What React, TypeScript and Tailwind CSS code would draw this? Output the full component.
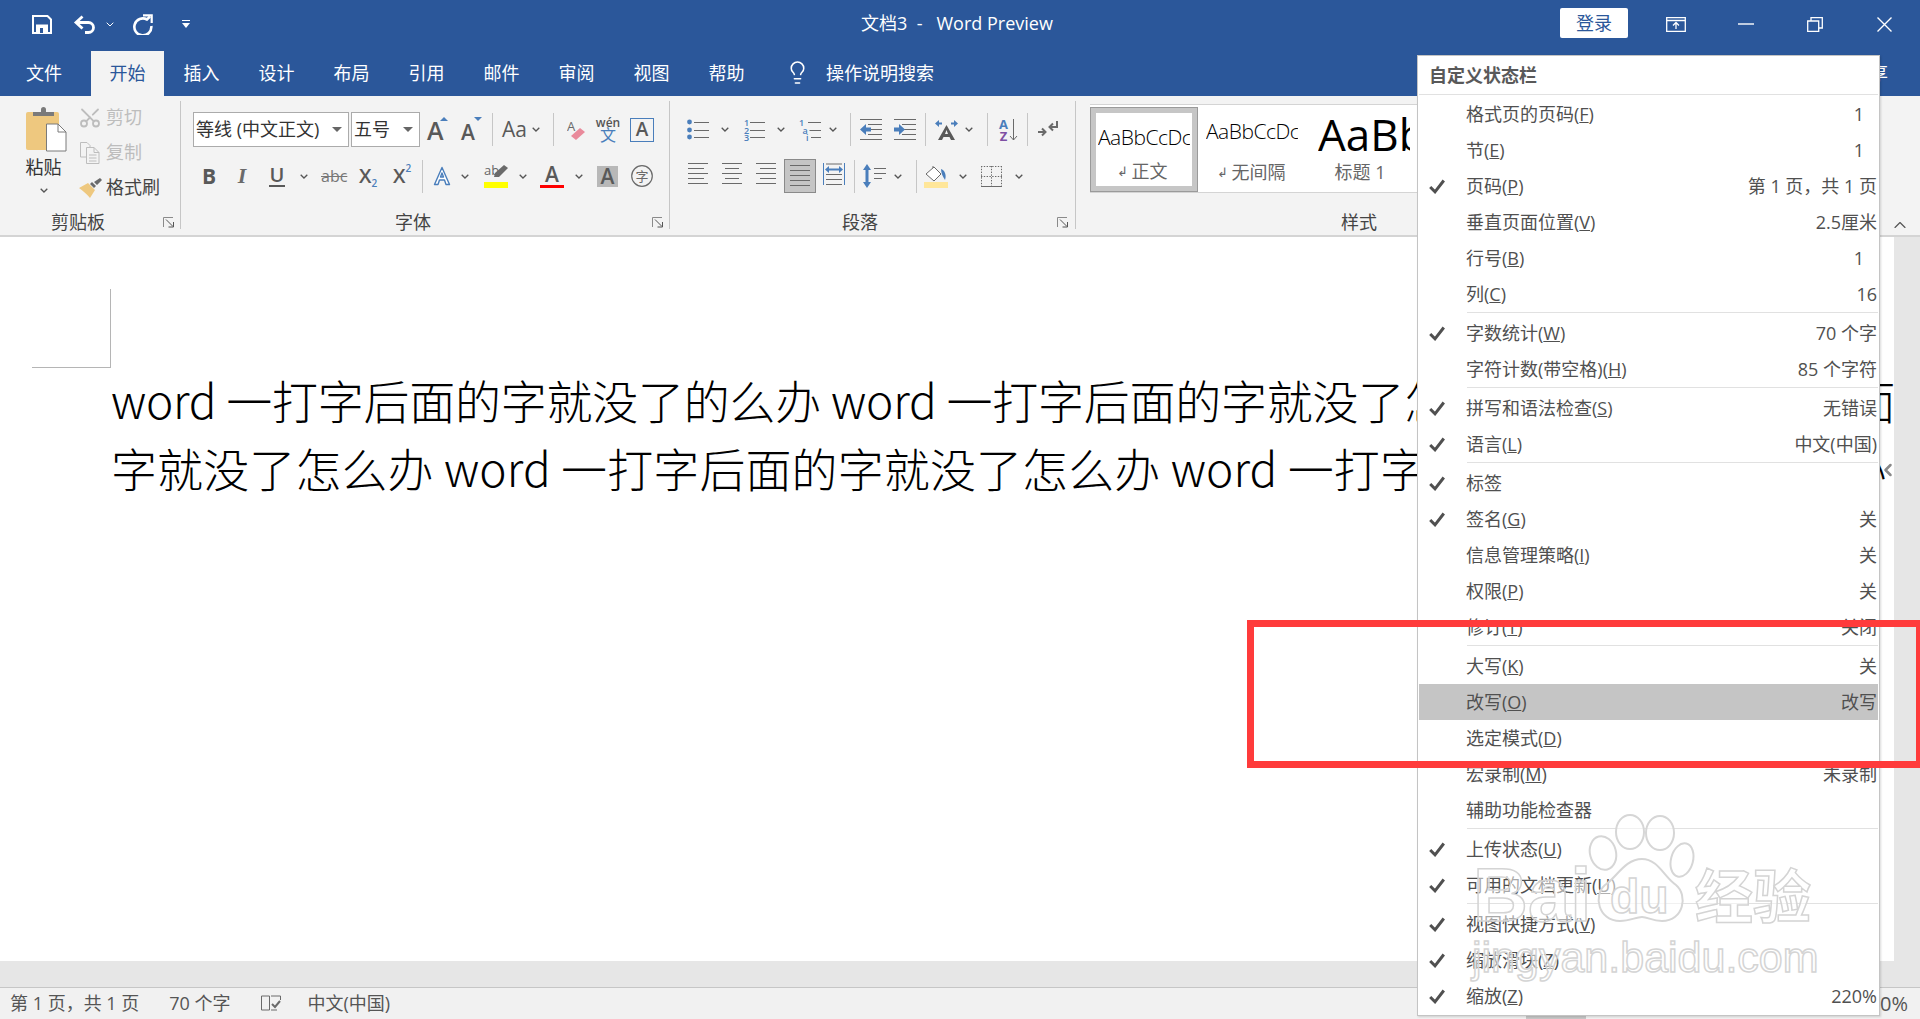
import { Lightbulb, Scissors, ChevronUp, ChevronLeft } from 'lucide-react';
import type { ReactNode } from 'react';

const TABS = [
  { label: '文件', w: 'w-[91px] pr-[3px]' },
  { label: '开始', w: 'w-[73px]', active: true },
  { label: '插入', w: 'w-[75px]' },
  { label: '设计', w: 'w-[75px]' },
  { label: '布局', w: 'w-[75px]' },
  { label: '引用', w: 'w-[75px]' },
  { label: '邮件', w: 'w-[75px]' },
  { label: '审阅', w: 'w-[75px]' },
  { label: '视图', w: 'w-[75px]' },
  { label: '帮助', w: 'w-[75px]' },
];

// ─── Small shared bits ───────────────────────────────────────────────────────

function Chev({ className = '' }: { className?: string }) {
  return (
    <svg width="8" height="5" viewBox="0 0 8 5" className={className}>
      <path d="M.7.7 4 4l3.3-3.3" fill="none" stroke="#555" strokeWidth="1.3" />
    </svg>
  );
}

function Sep({ className = '' }: { className?: string }) {
  return <div className={`w-px h-[33px] bg-[#c6c6c6] ${className}`} />;
}

function Launcher({ className = '' }: { className?: string }) {
  return (
    <svg width="12" height="11" viewBox="0 0 12 11" className={`absolute bottom-[7px] ${className}`}>
      <path d="M.5 10V.5H10" fill="none" stroke="#8a8a8a" />
      <path d="M3 2.5 10 9.5M10.5 5v5H5.5" fill="none" stroke="#555" />
    </svg>
  );
}

function GroupLabel({ children, className = '' }: { children: ReactNode; className?: string }) {
  return (
    <div className={`h-[26px] flex items-center justify-center text-[18px] text-[#444] ${className}`}>{children}</div>
  );
}

function GroupDivider() {
  return <div className="w-px h-[128px] mt-[5px] bg-[#c6c6c6] shrink-0" />;
}

/** Horizontal rules used by the paragraph icons */
function Rules({ rows, w = 20, h = 22 }: { rows: [number, number, number][]; w?: number; h?: number }) {
  return (
    <svg width={w} height={h} viewBox={`0 0 ${w} ${h}`}>
      {rows.map(([x1, x2, y], i) => (
        <path key={i} d={`M${x1} ${y + 0.5}H${x2}`} stroke="#6a6a6a" strokeWidth="1" />
      ))}
    </svg>
  );
}

function GlyphA({ size, className = '' }: { size: number; className?: string }) {
  return (
    <span
      className={`font-['Open_Sans',sans-serif] font-semibold leading-none text-[#595959] ${className}`}
      style={{ fontSize: size }}
    >
      A
    </span>
  );
}

// ─── Ribbon groups ───────────────────────────────────────────────────────────

function ClipboardGroup() {
  return (
    <div className="w-[180px] shrink-0 relative">
      <div className="h-[113px] flex">
        <div className="ml-[20px] w-[47px] pt-[11px] flex flex-col items-center">
          <svg width="41" height="45" viewBox="0 0 41 45" className="ml-[6px] shrink-0">
            <rect x="0" y="5" width="33" height="38" rx="2" fill="#eec87f" />
            <path d="M7 9V5h8V2.5a2.5 2.5 0 0 1 5 0V5h8v4z" fill="#7a7a7a" />
            <path d="M20.5 17H32l8 8v19H20.5z" fill="#fff" stroke="#7a7a7a" />
            <path d="M32 17v8h8" fill="none" stroke="#7a7a7a" />
          </svg>
          <div className="mt-[5px] text-[18px] leading-[20px] text-[#333]">粘贴</div>
          <Chev className="mt-[11px]" />
        </div>
        <div className="ml-[11px] pt-[4px] flex flex-col text-[18px]">
          <div className="h-[35px] flex items-center text-[#bdbdbd]">
            <span className="w-[24px] flex justify-center">
              <Scissors size={25} strokeWidth={1.8} className="-rotate-90" color="#bdbdbd" />
            </span>
            <span className="ml-[4px]">剪切</span>
          </div>
          <div className="h-[35px] flex items-center text-[#bdbdbd]">
            <span className="w-[24px] flex justify-center">
              <svg width="20" height="22" viewBox="0 0 20 22" fill="none" stroke="#bdbdbd">
                <path d="M.5.5H7l3 3V5M.5.5V15H6" />
                <path d="M6.5 5.5H14l5 5v11H6.5zM14 5.5v5h5M9 13h7.5M9 16h7.5M9 19h7.5" />
              </svg>
            </span>
            <span className="ml-[4px]">复制</span>
          </div>
          <div className="h-[35px] flex items-center text-[#444]">
            <span className="w-[24px] flex justify-center">
              <svg width="23" height="20" viewBox="0 0 23 20">
                <path d="M0 10 9 5l7 7-5 8C8 16 4 13 0 10z" fill="#eec87f" />
                <path d="m11 6 4 4 2-2-4-4zM15 4l3 3 5-5-2-2z" fill="#6a6a6a" />
              </svg>
            </span>
            <span className="ml-[4px]">格式刷</span>
          </div>
        </div>
      </div>
      <GroupLabel className="w-[156px]">剪贴板</GroupLabel>
      <Launcher className="right-[5px]" />
    </div>
  );
}

function Select({ label, w, ml }: { label: string; w: string; ml: string }) {
  return (
    <div className={`${w} ${ml} h-[35px] bg-white border border-[#ababab] flex items-center pl-[2px] pr-[6px] text-[18px] text-[#333] whitespace-nowrap`}>
      <span className="flex-1">{label}</span>
      <span className="w-0 h-0 border-x-[5px] border-x-transparent border-t-[5px] border-t-[#666]" />
    </div>
  );
}

function FontGroup() {
  return (
    <div className="w-[488px] shrink-0 relative">
      <div className="h-[113px] pt-[16px]">
        <div className="h-[35px] flex items-center">
          <Select label="等线 (中文正文)" w="w-[156px]" ml="ml-[12px]" />
          <Select label="五号" w="w-[69px]" ml="ml-[2px]" />
          <span className="ml-[6px] w-[22px] h-[26px] relative flex items-end">
            <GlyphA size={25} className="ml-[1px]" />
            <span className="absolute right-0 top-0 w-0 h-0 border-x-[4px] border-x-transparent border-b-[4px] border-b-[#4a7ebb]" />
          </span>
          <span className="ml-[12px] w-[22px] h-[26px] relative flex items-end">
            <GlyphA size={21} className="ml-[1px]" />
            <span className="absolute right-0 top-0 w-0 h-0 border-x-[4px] border-x-transparent border-t-[4px] border-t-[#4a7ebb]" />
          </span>
          <Sep className="ml-[10px]" />
          <span className="ml-[9px] w-[23px] text-[21px] leading-none whitespace-nowrap text-[#595959] font-['Open_Sans',sans-serif]">Aa</span>
          <Chev className="ml-[7px]" />
          <Sep className="ml-[13px]" />
          <svg width="18" height="22" viewBox="0 0 18 22" className="ml-[13px]">
            <text x="0" y="12" fontSize="13" fill="#6a6a6a" fontFamily="Open Sans">A</text>
            <path d="m4 17 9-8 5 4-9 8z" fill="#e98a9b" />
          </svg>
          <span className="ml-[13px] w-[20px] flex flex-col items-center leading-none">
            <span className="text-[12px] leading-[11px] text-[#555] font-semibold font-['Open_Sans',sans-serif]">wén</span>
            <span className="text-[16px] leading-[15px] text-[#4a7ebb]">文</span>
          </span>
          <span className="ml-[12px] w-[24px] h-[24px] border border-[#4a7ebb] flex items-center justify-center">
            <GlyphA size={19} />
          </span>
        </div>
        <div className="mt-[12px] h-[34px] flex items-center">
          <span className="ml-[20px] w-[16px] text-center text-[21px] font-bold leading-none text-[#595959] font-['Open_Sans',sans-serif]">B</span>
          <span className="ml-[17px] w-[16px] text-center text-[22px] font-bold italic leading-none text-[#6a6a6a] font-['Liberation_Serif',serif]">I</span>
          <span className="ml-[19px] w-[16px] text-center text-[20px] font-semibold leading-[20px] text-[#595959] border-b-2 border-[#595959] font-['Open_Sans',sans-serif]">U</span>
          <Chev className="ml-[15px]" />
          <span className="ml-[13px] w-[25px] text-center text-[16px] leading-none text-[#777] line-through font-['Open_Sans',sans-serif]">abc</span>
          <span className="ml-[13px] w-[19px] flex items-end text-[20px] leading-none font-semibold text-[#595959] font-['Open_Sans',sans-serif]">
            X<span className="text-[10px] leading-none text-[#4a7ebb] -mb-[2px]">2</span>
          </span>
          <span className="ml-[15px] w-[19px] flex items-start text-[20px] leading-none font-semibold text-[#595959] font-['Open_Sans',sans-serif]">
            X<span className="text-[10px] leading-none text-[#4a7ebb] -mt-[3px]">2</span>
          </span>
          <Sep className="ml-[10px]" />
          <svg width="18" height="20" viewBox="0 0 18 20" className="ml-[10px]">
            <path d="M9 1.5 16.5 18.5h-3.5L11.5 14h-5L5 18.5H1.5zM9 7 7.5 11h3z" fill="#fff" stroke="#4a7ebb" strokeWidth="1.4" strokeLinejoin="round" />
          </svg>
          <Chev className="ml-[10px]" />
          <span className="ml-[15px] w-[24px] h-[24px] flex flex-col items-start justify-end relative">
            <span className="absolute left-0 top-0 text-[13px] leading-none text-[#666] font-['Open_Sans',sans-serif]">ab</span>
            <svg width="14" height="14" viewBox="0 0 14 14" className="absolute right-0 top-[1px]">
              <path d="M10 0 14 3 5 12H0l1-4z" fill="#6a6a6a" />
            </svg>
            <span className="w-full h-[6px] bg-[#ffff00]" />
          </span>
          <Chev className="ml-[11px]" />
          <span className="ml-[13px] w-[24px] h-[24px] flex flex-col items-center justify-end">
            <GlyphA size={21} className="leading-[18px]" />
            <span className="w-full h-[6px] bg-[#ff0000]" />
          </span>
          <Chev className="ml-[11px]" />
          <span className="ml-[14px] w-[21px] h-[21px] bg-[#b8b8b8] flex items-center justify-center">
            <GlyphA size={21} />
          </span>
          <svg width="22" height="22" viewBox="0 0 22 22" className="ml-[13px]">
            <circle cx="11" cy="11" r="10.3" fill="none" stroke="#6a6a6a" strokeWidth="1.2" />
            <text x="11" y="16" fontSize="13" textAnchor="middle" fill="#6a6a6a" fontFamily="Noto Sans CJK SC">字</text>
          </svg>
        </div>
      </div>
      <GroupLabel className="w-[464px]">字体</GroupLabel>
      <Launcher className="right-[5px]" />
    </div>
  );
}

function ListIcon({ kind }: { kind: 'bullet' | 'number' | 'multi' }) {
  const blue = '#4a7ebb';
  const w = kind === 'multi' ? 23 : 22;
  const x = kind === 'multi' ? 12 : 7;
  const ys = [3, 11, 18];
  const marks = kind === 'number' ? ['1', '2', '3'] : ['1', 'a', 'i'];
  return (
    <svg width={w} height={22} viewBox={`0 0 ${w} 22`}>
      {ys.map((y, i) => (
        <g key={y}>
          {kind === 'bullet' ? (
            <circle cx="2.5" cy={y} r="2.4" fill={blue} />
          ) : (
            <text
              x={kind === 'multi' ? i * 3.5 + 1 : 1}
              y={y + 3.5}
              fontSize="9"
              fontWeight="600"
              fill={blue}
              fontFamily="Open Sans"
            >
              {marks[i]}
            </text>
          )}
          <path d={`M${kind === 'multi' ? x + i * 1.5 - 2 : x} ${y + 0.5}H${w}`} stroke="#6a6a6a" />
        </g>
      ))}
    </svg>
  );
}

function IndentIcon({ flip }: { flip?: boolean }) {
  return (
    <svg width="22" height="22" viewBox="0 0 22 22">
      <path d="M0 .5h22M8 5.5h14M8 10.5h14M8 15.5h14M0 20.5h22" stroke="#6a6a6a" />
      {flip ? (
        <path d="M0 8.5h5V5l6 5.5-6 5.5v-3.5H0z" fill="#4a7ebb" />
      ) : (
        <path d="M11 8.5H6V5l-6 5.5L6 16v-3.5h5z" fill="#4a7ebb" />
      )}
    </svg>
  );
}

function ParagraphGroup() {
  return (
    <div className="w-[405px] shrink-0 relative">
      <div className="h-[113px] pt-[16px]">
        <div className="h-[35px] flex items-center">
          <span className="ml-[17px] flex"><ListIcon kind="bullet" /></span>
          <Chev className="ml-[12px]" />
          <span className="ml-[14px] flex"><ListIcon kind="number" /></span>
          <Chev className="ml-[12px]" />
          <span className="ml-[13px] flex"><ListIcon kind="multi" /></span>
          <Chev className="ml-[8px]" />
          <Sep className="ml-[13px]" />
          <span className="ml-[9px] flex"><IndentIcon /></span>
          <span className="ml-[12px] flex"><IndentIcon flip /></span>
          <Sep className="ml-[9px]" />
          <svg width="23" height="20" viewBox="0 0 23 20" className="ml-[9px]">
            <path d="M0 3.5 4 0v2.5h3v2H4V7zM23 3.5 19 0v2.5h-3v2h3V7z" fill="#4a7ebb" />
            <path d="M11.5 5 20 20h-4l-1.5-3h-6L7 20H3zM10 14h3l-1.5-4z" fill="#595959" />
          </svg>
          <Chev className="ml-[7px]" />
          <Sep className="ml-[14px]" />
          <span className="ml-[10px] w-[20px] h-[24px] flex">
            <span className="w-[11px] flex flex-col items-center font-['Open_Sans',sans-serif] text-[13px] leading-[12px] font-bold">
              <span className="text-[#4a7ebb]">A</span>
              <span className="text-[#7e4fa3]">Z</span>
            </span>
            <svg width="9" height="24" viewBox="0 0 9 24">
              <path d="M4.5 1v21M1 18l3.5 4L8 18" fill="none" stroke="#6a6a6a" />
            </svg>
          </span>
          <Sep className="ml-[9px]" />
          <svg width="20" height="20" viewBox="0 0 20 20" className="ml-[10px]">
            <path d="M19 1v6h-7M15 3.5 11.5 7l3.5 3.5M0 12h7M4 8.5 7.5 12 4 15.5" fill="none" stroke="#6a6a6a" strokeWidth="2" />
          </svg>
        </div>
        <div className="mt-[12px] h-[34px] flex items-center">
          <span className="ml-[18px] flex -mt-[4px]">
            <Rules rows={[[0, 20, 0], [0, 16, 5], [0, 20, 10], [0, 16, 15], [0, 20, 20]]} />
          </span>
          <span className="ml-[14px] flex -mt-[4px]">
            <Rules rows={[[0, 20, 0], [3, 17, 5], [0, 20, 10], [3, 17, 15], [0, 20, 20]]} />
          </span>
          <span className="ml-[14px] flex -mt-[4px]">
            <Rules rows={[[0, 20, 0], [4, 20, 5], [0, 20, 10], [4, 20, 15], [0, 20, 20]]} />
          </span>
          <span className="ml-[8px] w-[32px] h-[34px] bg-[#c5c5c5] border border-[#8a8a8a] flex items-center justify-center">
            <Rules rows={[[0, 20, 0], [0, 20, 5], [0, 20, 10], [0, 20, 15], [0, 20, 20]]} />
          </span>
          <svg width="22" height="22" viewBox="0 0 22 22" className="ml-[7px] -mt-[4px]">
            <path d="M.5 0v22M21.5 0v22" stroke="#4a7ebb" />
            <path d="M3 1h16M3 11.5h16M3 16.5h16M3 21.5h16" stroke="#6a6a6a" />
            <path d="M2 6.5 6 3v2.5h10V3l4 3.5-4 3.5V7.5H6V10z" fill="#4a7ebb" />
          </svg>
          <Sep className="ml-[9px]" />
          <svg width="23" height="24" viewBox="0 0 23 24" className="ml-[8px]">
            <path d="M4 0 8 6H5.5v12H8l-4 6-4-6h2.5V6H0z" fill="#4a7ebb" />
            <path d="M11 4.5h12M11 9.5h12M11 14.5h8" stroke="#6a6a6a" />
          </svg>
          <Chev className="ml-[8px]" />
          <Sep className="ml-[14px]" />
          <svg width="24" height="24" viewBox="0 0 24 24" className="ml-[7px]">
            <path d="M9 2v6" stroke="#6a6a6a" fill="none" />
            <path d="M2 10 10 3l7 7-7 7z" fill="#fff" stroke="#6a6a6a" />
            <path d="M17 5c3 1 6 5 4 11-2-3-4-7-4-11z" fill="#4a7ebb" />
            <rect y="18" width="24" height="6" fill="#ffe699" />
          </svg>
          <Chev className="ml-[11px]" />
          <svg width="21" height="21" viewBox="0 0 21 21" className="ml-[14px]">
            <path d="M.5 0v21M10.5 0v21M20.5 0v21M0 .5h21M0 10.5h21" stroke="#6a6a6a" strokeDasharray="1.4 1.4" fill="none" />
            <path d="M0 20.5h21" stroke="#6a6a6a" />
          </svg>
          <Chev className="ml-[13px]" />
        </div>
      </div>
      <GroupLabel className="w-[380px]">段落</GroupLabel>
      <Launcher className="right-[6px]" />
    </div>
  );
}

function StyleItem({ sample, label, arrow, selected, big, w }: {
  sample: string;
  label: string;
  arrow?: boolean;
  selected?: boolean;
  big?: boolean;
  w: string;
}) {
  return (
    <div className={`${w} shrink-0 h-[85px] overflow-hidden flex flex-col items-start ${selected ? 'border-[6px] border-[#c6c6c6] outline outline-[#9a9a9a] -outline-offset-1 px-[2px]' : 'pl-[8px]'}`}>
      <div className={`h-[52px] w-[92px] overflow-hidden whitespace-nowrap flex items-center text-black ${big ? 'text-[44px] font-medium pt-[2px]' : 'text-[21px] font-light tracking-[-0.5px] -mt-[1px]'}`}>
        {sample}
      </div>
      <div className={`flex items-center justify-center gap-[4px] text-[18px] leading-none text-[#666] ${big ? 'w-[84px] mt-[4px]' : selected ? 'w-[88px] -mt-[2px]' : 'w-[90px] mt-[5px]'}`}>
        {arrow && <span className="text-[13px]">↲</span>}
        {label}
      </div>
    </div>
  );
}

function StylesGroup() {
  return (
    <div className="flex-1 relative">
      <div className="h-[113px] pt-[8px]">
        <div className="ml-[14px] w-[500px] h-[89px] bg-white border-y border-[#d4d4d4] flex pt-[2px] overflow-hidden">
          <StyleItem w="w-[108px]" sample="AaBbCcDc" label="正文" arrow selected />
          <StyleItem w="w-[112px]" sample="AaBbCcDc" label="无间隔" arrow />
          <StyleItem w="w-[110px]" sample="AaBb" label="标题 1" big />
        </div>
      </div>
      <GroupLabel className="w-[566px]">样式</GroupLabel>
      <ChevronUp size={20} strokeWidth={1.4} color="#555" className="absolute right-[10px] bottom-[0px]" />
    </div>
  );
}

// ─── Status bar menu ─────────────────────────────────────────────────────────

type MenuItem =
  | 'sep'
  | { label: string; key?: string; value?: string; checked?: boolean; hot?: boolean };

const MENU: MenuItem[] = [
  { label: '格式页的页码', key: 'F', value: '1' },
  { label: '节', key: 'E', value: '1' },
  { label: '页码', key: 'P', value: '第 1 页，共 1 页', checked: true },
  { label: '垂直页面位置', key: 'V', value: '2.5厘米' },
  { label: '行号', key: 'B', value: '1' },
  { label: '列', key: 'C', value: '16' },
  'sep',
  { label: '字数统计', key: 'W', value: '70 个字', checked: true },
  { label: '字符计数(带空格)', key: 'H', value: '85 个字符' },
  'sep',
  { label: '拼写和语法检查', key: 'S', value: '无错误', checked: true },
  { label: '语言', key: 'L', value: '中文(中国)', checked: true },
  'sep',
  { label: '标签', checked: true },
  { label: '签名', key: 'G', value: '关', checked: true },
  { label: '信息管理策略', key: 'I', value: '关' },
  { label: '权限', key: 'P', value: '关' },
  { label: '修订', key: 'T', value: '关闭' },
  'sep',
  { label: '大写', key: 'K', value: '关' },
  { label: '改写', key: 'O', value: '改写', hot: true },
  { label: '选定模式', key: 'D' },
  { label: '宏录制', key: 'M', value: '未录制' },
  { label: '辅助功能检查器' },
  'sep',
  { label: '上传状态', key: 'U', checked: true },
  { label: '可用的文档更新', key: 'U', checked: true },
  'sep',
  { label: '视图快捷方式', key: 'V', checked: true },
  { label: '缩放滑块', key: 'Z', checked: true },
  { label: '缩放', key: 'Z', value: '220%', checked: true },
];

function StatusMenu() {
  return (
    <div className="absolute left-[1417px] top-[55px] w-[463px] h-[961px] bg-white border border-[#c4c4c4] shadow-[1px_1px_2px_rgba(0,0,0,0.15)] px-[1px] text-[18px] text-[#505050]">
      <div className="h-[38px] flex items-center pl-[10px] font-bold text-[#595959]">自定义状态栏</div>
      <div className="h-px bg-[#e1e1e1]" />
      <div className="h-px" />
      {MENU.map((item, i) => {
        if (item === 'sep') {
          return (
            <div key={i} className="h-[3px]">
              <div className="ml-[48px] h-px bg-[#e1e1e1]" />
            </div>
          );
        }
        return (
          <div key={i} className={`h-[36px] flex items-center pr-[1px] ${item.hot ? 'bg-[#c5c5c5]' : ''}`}>
            <span className="w-[47px] pl-[10px] flex">
              {item.checked && (
                <svg width="16" height="15" viewBox="0 0 16 15">
                  <path d="M1.2 8 6 12.8 14.8 1.5" fill="none" stroke="#505050" strokeWidth="3" />
                </svg>
              )}
            </span>
            <span className="whitespace-nowrap">
              {item.label}
              {item.key && (
                <>
                  (<u>{item.key}</u>)
                </>
              )}
            </span>
            {item.value && (
              <span className={`ml-auto whitespace-pre ${item.value === '1' ? 'mr-[13px]' : ''}`}>{item.value}</span>
            )}
          </div>
        );
      })}
    </div>
  );
}

function Watermark() {
  const stroke = '[-webkit-text-stroke:1.5px_#d4d4d4]';
  return (
    <div className="absolute left-0 top-0 pointer-events-none">
      <svg width="110" height="112" viewBox="0 0 110 112" className="absolute left-[1587px] top-[813px]">
        <g fill="#fff" fillOpacity="0.55" stroke="#d6d6d6" strokeWidth="2">
          <ellipse cx="43" cy="19" rx="14" ry="17" />
          <ellipse cx="73" cy="20" rx="14" ry="17" />
          <ellipse cx="16" cy="40" rx="13" ry="17" transform="rotate(-15 16 40)" />
          <ellipse cx="95" cy="47" rx="11" ry="17" transform="rotate(15 95 47)" />
          <path d="M55 46c16 0 22 18 34 26 12 10 8 36-14 36-10 0-14-4-20-4s-12 4-22 4C11 108 6 82 18 72c12-8 20-26 37-26z" />
        </g>
      </svg>
      <div className={`absolute left-[1473px] top-[847px] text-[76px] leading-[96px] font-bold text-white/50 font-['Liberation_Sans',sans-serif] ${stroke}`}>Bai</div>
      <div className={`absolute left-[1610px] top-[869px] text-[48px] leading-[56px] font-bold text-white/50 font-['Liberation_Sans',sans-serif] ${stroke}`}>du</div>
      <div className={`absolute left-[1695px] top-[851px] text-[58px] leading-[84px] font-bold whitespace-nowrap text-white/50 font-['Noto_Sans_CJK_SC',sans-serif] ${stroke}`}>经验</div>
      <div className={`absolute left-[1472px] top-[927px] text-[43px] leading-[60px] whitespace-nowrap text-white/50 font-['Liberation_Sans',sans-serif] ${stroke}`}>jingyan.baidu.com</div>
    </div>
  );
}

export default function App() {
  return (
    <div className="relative w-[1920px] h-[1019px] overflow-hidden flex flex-col bg-white font-['Open_Sans','Noto_Sans_CJK_SC',sans-serif]">
      {/* Title bar */}
      <div className="h-[51px] pb-[3px] bg-[#2b579a] flex items-center relative text-white shrink-0">
        <svg width="20" height="19" viewBox="0 0 20 19" className="ml-[32px]">
          <path d="M1 1h14.5L19 4.5V18H1z" fill="none" stroke="#fff" strokeWidth="2" />
          <path d="M4 9.5h12V18H4z" fill="#fff" />
          <path d="M8 13h3v5H8z" fill="#2b579a" />
        </svg>
        <svg width="23" height="19" viewBox="0 0 23 19" className="ml-[21px]">
          <path d="M9.5 1.5 3 7.5l6.5 6M3 7.5h12.5a5 5 0 0 1 0 10H12" fill="none" stroke="#fff" strokeWidth="2.8" />
        </svg>
        <svg width="8" height="5" viewBox="0 0 8 5" className="ml-[10px]">
          <path d="M.7.7 4 4l3.3-3.3" fill="none" stroke="#fff" />
        </svg>
        <svg width="21" height="21" viewBox="0 0 21 21" className="ml-[18px]">
          <path d="M18 2.5 15 5.5A8.5 8.5 0 1 0 19.3 12" fill="none" stroke="#fff" strokeWidth="2.6" />
          <path d="M11 1.3h8.7V9" fill="none" stroke="#fff" strokeWidth="2.2" />
        </svg>
        <svg width="8" height="8" viewBox="0 0 8 8" className="ml-[29px]">
          <path d="M0 .5h8" stroke="#fff" />
          <path d="M0 3h8L4 8z" fill="#fff" />
        </svg>
        <div className="absolute left-[861px] top-[10px] text-[18px] leading-[26px] whitespace-pre">文档3  -   Word Preview</div>
        <div className="ml-auto -mt-[2px] w-[68px] h-[30px] rounded-[2px] bg-white text-[#2b579a] text-[18px] flex items-center justify-center">登录</div>
        <svg width="20" height="15" viewBox="0 0 20 15" className="ml-[38px]">
          <path d="M.7.7h18.6v13.6H.7zM.7 3.5h18.6" fill="none" stroke="#fff" strokeWidth="1.3" />
          <path d="M10 12V6M7 8.5 10 5.5l3 3" fill="none" stroke="#fff" strokeWidth="1.3" />
        </svg>
        <svg width="16" height="2" viewBox="0 0 16 2" className="ml-[52px]">
          <path d="M0 1h16" stroke="#fff" strokeWidth="1.4" />
        </svg>
        <svg width="16" height="15" viewBox="0 0 16 15" className="ml-[53px]">
          <path d="M.7 4h11v10.3H.7zM4 4V.7h11.3V11H11.7" fill="none" stroke="#fff" strokeWidth="1.3" />
        </svg>
        <svg width="15" height="15" viewBox="0 0 15 15" className="ml-[54px] mr-[28px]">
          <path d="m.5.5 14 14M14.5.5l-14 14" fill="none" stroke="#fff" strokeWidth="1.4" />
        </svg>
      </div>

      {/* Tabs */}
      <div className="h-[45px] bg-[#2b579a] flex text-[18px] text-white shrink-0">
        {TABS.map((t) => (
          <div
            key={t.label}
            className={`${t.w} flex items-center justify-center ${t.active ? 'bg-[#f3f3f3] text-[#2b579a]' : ''}`}
          >
            {t.label}
          </div>
        ))}
        <Lightbulb size={25} strokeWidth={1.5} color="#fff" className="ml-[21px] mt-[9px]" />
        <div className="ml-[16px] flex items-center">操作说明搜索</div>
        <div className="ml-auto mr-[32px] flex items-center">共享</div>
      </div>

      {/* Ribbon */}
      <div className="h-[141px] bg-[#f3f3f3] border-b-2 border-[#d4d4d4] flex shrink-0">
        <ClipboardGroup />
        <GroupDivider />
        <FontGroup />
        <GroupDivider />
        <ParagraphGroup />
        <GroupDivider />
        <StylesGroup />
      </div>

      {/* Document */}
      <div className="flex-1 flex min-h-0">
        <div className="flex-1 bg-white overflow-hidden relative font-['Noto_Sans_CJK_SC',sans-serif] font-light">
          <div className="ml-[32px] mt-[52px] w-[79px] h-[79px] border-r border-b border-[#b5b5b5]" />
          <div className="ml-[111px] -mt-[3px] w-[1800px] text-[46px] leading-[68px] text-black whitespace-nowrap">
            <div className="tracking-[-0.25px]">word 一打字后面的字就没了的么办 word 一打字后面的字就没了怎么办 word 一打字后面</div>
            <div className="tracking-[0.1px]">字就没了怎么办 word 一打字后面的字就没了怎么办 word 一打字后面的字就没了怎么办</div>
          </div>
          <ChevronLeft size={20} strokeWidth={3} color="#888" className="absolute -right-[4px] top-[223px]" />
        </div>
        <div className="w-[26px] bg-[#e6e6e6] shrink-0" />
      </div>
      <div className="h-[26px] bg-[#e6e6e6] shrink-0" />

      {/* Status bar */}
      <div className="h-[32px] bg-[#f1f1f1] border-t border-[#c6c6c6] flex items-center text-[18px] text-[#555] shrink-0">
        <span className="ml-[10px]">第 1 页，共 1 页</span>
        <span className="ml-[30px]">70 个字</span>
        <svg width="20" height="18" viewBox="0 0 20 18" className="ml-[30px]">
          <path d="M.5 1h8v14h-8zM10 1h9.5v4M10 15h6" fill="none" stroke="#6a6a6a" />
          <path d="m11 9 3 3 5-6" fill="none" stroke="#6a6a6a" strokeWidth="2" />
        </svg>
        <span className="ml-[27px]">中文(中国)</span>
        <div className="ml-[1136px] self-end w-[60px] h-[3px] bg-[#c6c6c6]" />
        <span className="ml-auto mr-[12px] text-[20px]">220%</span>
      </div>

      <StatusMenu />
      <Watermark />
      {/* Red annotation box drawn on the screenshot */}
      <div className="absolute left-[1247px] top-[620px] w-[673px] h-[148px] border-[7px] border-r-[4px] border-[#ff3b3b]" />
    </div>
  );
}
